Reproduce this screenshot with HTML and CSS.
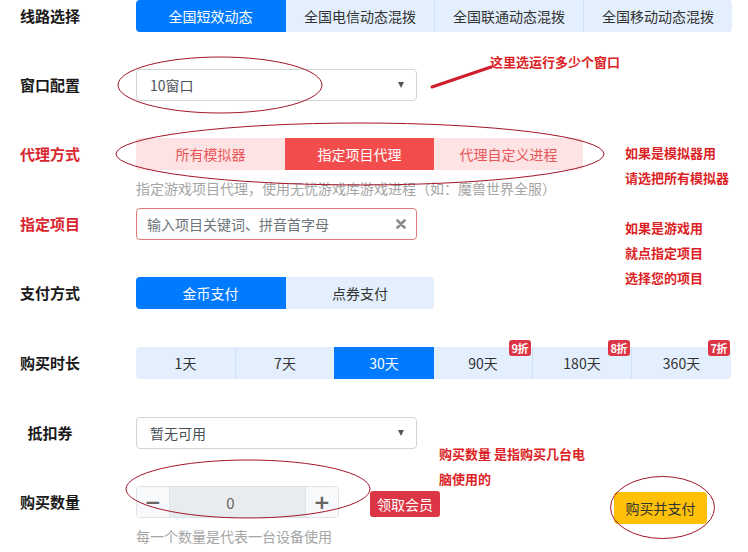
FILE: index.html
```html
<!DOCTYPE html>
<html lang="zh-CN">
<head>
<meta charset="utf-8">
<title>购买</title>
<link rel="stylesheet" href="styles.css">
</head>
<body>
<div class="page">
  <div class="form">
    <div class="row">
      <div class="label"><span>线路选择</span></div>
      <div class="ctrl">
        <div class="seg seg-blue">
          <div class="s active">全国短效动态</div>
          <div class="s">全国电信动态混拨</div>
          <div class="s">全国联通动态混拨</div>
          <div class="s">全国移动动态混拨</div>
        </div>
      </div>
    </div>

    <div class="row">
      <div class="label"><span>窗口配置</span></div>
      <div class="ctrl">
        <div class="select"><span>10窗口</span><i class="caret"></i></div>
      </div>
    </div>

    <div class="row gap38">
      <div class="label red"><span>代理方式</span></div>
      <div class="ctrl">
        <div class="seg seg-red">
          <div class="s">所有模拟器</div>
          <div class="s active">指定项目代理</div>
          <div class="s">代理自定义进程</div>
        </div>
        <div class="hint">指定游戏项目代理，使用无忧游戏库游戏进程（如：魔兽世界全服）</div>
      </div>
    </div>

    <div class="row">
      <div class="label red"><span>指定项目</span></div>
      <div class="ctrl">
        <div class="input red-border">
          <span class="ph">输入项目关键词、拼音首字母</span>
          <svg class="clear" width="10" height="10" viewBox="0 0 10 10"><path d="M1.5 1.5L8.5 8.5M8.5 1.5L1.5 8.5" stroke="#8a8a8a" stroke-width="2.6" stroke-linecap="round"/></svg>
        </div>
      </div>
    </div>

    <div class="row gap38">
      <div class="label"><span>支付方式</span></div>
      <div class="ctrl">
        <div class="seg seg-blue">
          <div class="s active">金币支付</div>
          <div class="s">点券支付</div>
        </div>
      </div>
    </div>

    <div class="row gap38">
      <div class="label"><span>购买时长</span></div>
      <div class="ctrl">
        <div class="seg seg-blue dur">
          <div class="s">1天</div>
          <div class="s">7天</div>
          <div class="s active">30天</div>
          <div class="s">90天<b class="badge">9折</b></div>
          <div class="s">180天<b class="badge">8折</b></div>
          <div class="s">360天<b class="badge">7折</b></div>
        </div>
      </div>
    </div>

    <div class="row">
      <div class="label"><span>抵扣券</span></div>
      <div class="ctrl">
        <div class="select"><span>暂无可用</span><i class="caret"></i></div>
      </div>
    </div>

    <div class="row last">
      <div class="label"><span>购买数量</span></div>
      <div class="ctrl">
        <div class="line">
          <div class="stepper">
            <div class="btn-s">&minus;</div>
            <div class="num">0</div>
            <div class="btn-s">+</div>
          </div>
          <div class="vip">领取会员</div>
          <div class="buy">购买并支付</div>
        </div>
        <div class="hint">每一个数量是代表一台设备使用</div>
      </div>
    </div>
  </div>

  <div class="note n1">这里选运行多少个窗口</div>
  <div class="note n2">如果是模拟器用<br>请选把所有模拟器</div>
  <div class="note n3">如果是游戏用<br>就点指定项目<br>选择您的项目</div>
  <div class="note n4">购买数量 是指购买几台电<br>脑使用的</div>

  <svg class="marks" width="748" height="552" viewBox="0 0 748 552">
    <g fill="none" stroke="#a3162a" stroke-width="1">
      <ellipse cx="220" cy="85" rx="102" ry="28"/>
      <ellipse cx="360" cy="154" rx="244" ry="31"/>
      <ellipse cx="248" cy="489" rx="122" ry="29"/>
      <ellipse cx="662.5" cy="507.5" rx="52" ry="31"/>
    </g>
    <line x1="432" y1="87" x2="491" y2="67" stroke="#d01f2c" stroke-width="3" stroke-linecap="round"/>
  </svg>
</div>
</body>
</html>
```

FILE: styles.css
```css
* { box-sizing: border-box; }
html, body { margin: 0; padding: 0; background: #fff; }
body {
  font-family: "Noto Sans CJK SC", "Noto Sans", sans-serif;
  font-size: 14px;
  color: #333;
}
.page {
  position: relative;
  width: 748px;
  height: 552px;
  overflow: hidden;
}
.form { display: flex; flex-direction: column; }
.row {
  display: flex;
  height: 32px;
  margin-bottom: 37px;
}
.row.gap38 { margin-bottom: 38px; }
.row.last { margin-bottom: 0; }
.label {
  width: 136px;
  padding-left: 20px;
  padding-bottom: 2px;
  display: flex;
  align-items: center;
  flex: none;
}
.label span {
  width: 60px;
  text-align: center;
  font-size: 15px;
  font-weight: bold;
  color: #1a1a1a;
  white-space: nowrap;
}
.label.red span { color: #d9262e; }
.ctrl { display: flex; flex-direction: column; flex: 1; }

.seg {
  display: flex;
  height: 32px;
  border-radius: 4px;
  overflow: visible;
}
.seg .s {
  position: relative;
  width: 149px;
  height: 32px;
  display: flex;
  align-items: center;
  justify-content: center;
  font-size: 14px;
  white-space: nowrap;
}
.seg-blue .s { background: #e3effd; color: #333; border-left: 1px solid #cde0f6; }
.seg-blue .s:first-child { border-left: none; border-radius: 4px 0 0 4px; }
.seg-blue .s:last-child { border-radius: 0 4px 4px 0; }
.seg-blue .s.active { background: #007bff; color: #fff; border-left-color: #007bff; }
.seg-blue .s.active + .s { border-left-color: #007bff; }
.seg-red .s { background: #fde3e3; color: #e8585a; }
.seg-red .s.active { background: #f24c4c; color: #fff; }
.seg-red .s:first-child { border-radius: 4px 0 0 4px; }
.seg-red .s:last-child { border-radius: 0 4px 4px 0; }
.dur .s { width: 99px; }
.dur .s:last-child { width: 100px; }
.badge {
  position: absolute;
  top: -7px;
  right: 1px;
  height: 16px;
  padding: 0 3px;
  background: #dc3545;
  color: #fff;
  font-size: 11px;
  font-weight: bold;
  line-height: 16px;
  border-radius: 3px;
  letter-spacing: -0.5px;
}

.select, .input {
  width: 281px;
  height: 32px;
  border: 1px solid #ced4da;
  border-radius: 4px;
  display: flex;
  align-items: center;
  justify-content: space-between;
  padding: 0 11px 0 13px;
  color: #495057;
  font-size: 14px;
}
.caret {
  width: 0;
  height: 0;
  border-left: 3.5px solid transparent;
  border-right: 3.5px solid transparent;
  border-top: 6px solid #555;
  margin-right: 1px;
}
.input { padding-left: 10px; padding-right: 10px; }
.red-border { border-color: #e07a7c; }
.ph { color: #6c757d; }
.clear { display: block; }

.hint {
  margin-top: 8px;
  line-height: 20px;
  font-size: 14px;
  color: #a5a5a5;
  white-space: nowrap;
}

.line { display: flex; align-items: center; height: 32px; }
.stepper {
  display: flex;
  width: 203px;
  height: 32px;
  border: 1px solid #dfe3e7;
  border-radius: 4px;
  overflow: hidden;
  flex: none;
}
.btn-s {
  width: 32px;
  background: #f8f9fa;
  display: flex;
  align-items: center;
  justify-content: center;
  font-size: 20px;
  font-weight: bold;
  color: #666;
  font-family: "DejaVu Sans", sans-serif;
}
.num {
  flex: 1;
  background: #e9ecef;
  border-left: 1px solid #dfe3e7;
  border-right: 1px solid #dfe3e7;
  display: flex;
  align-items: center;
  justify-content: center;
  padding-right: 14px;
  color: #666;
  font-size: 15px;
}
.vip {
  margin-left: 31px;
  margin-top: 4px;
  height: 26px;
  padding: 0 7px;
  background: #dc3545;
  color: #fff;
  border-radius: 3px;
  display: flex;
  align-items: center;
  font-size: 14px;
  white-space: nowrap;
}
.buy {
  margin-left: 174px;
  margin-top: 12px;
  width: 93px;
  height: 32px;
  background: #ffc107;
  color: #333;
  border-radius: 4px;
  display: flex;
  align-items: center;
  justify-content: center;
  font-size: 14px;
  white-space: nowrap;
}

.note {
  position: absolute;
  color: #dc1f26;
  font-size: 13px;
  font-weight: bold;
  line-height: 25px;
  white-space: nowrap;
}
.n1 { left: 490px; top: 49px; }
.n2 { left: 625px; top: 140px; }
.n3 { left: 625px; top: 215px; }
.n4 { left: 439px; top: 441px; }
.marks {
  position: absolute;
  left: 0;
  top: 0;
  pointer-events: none;
}
```
